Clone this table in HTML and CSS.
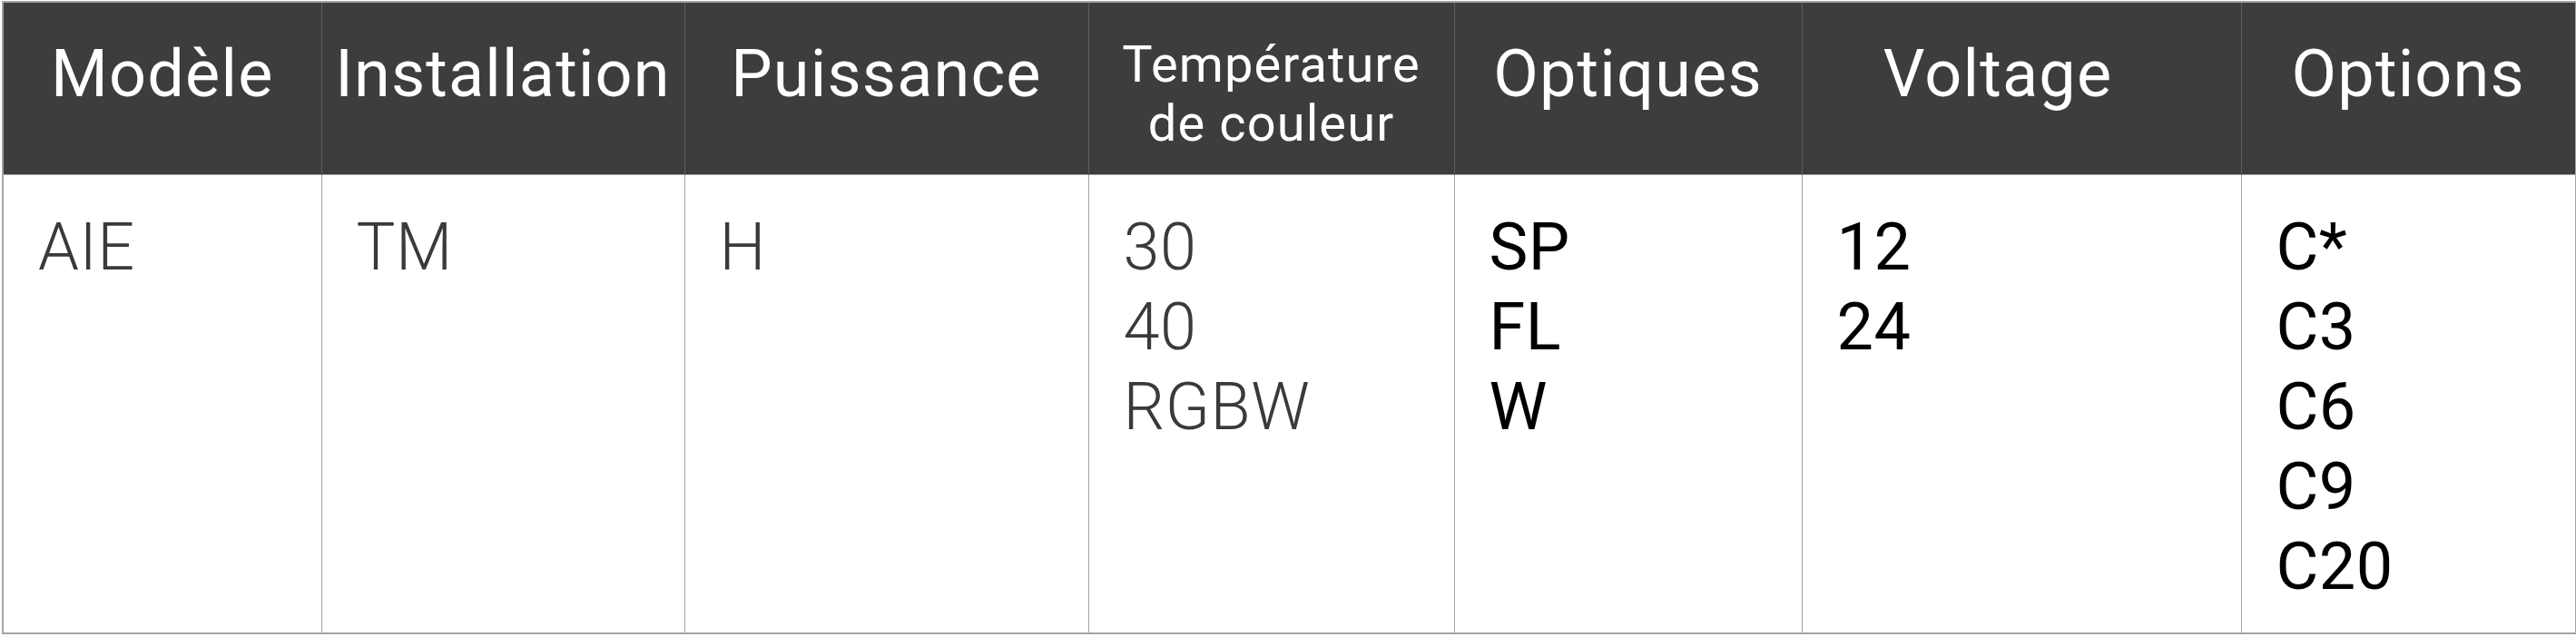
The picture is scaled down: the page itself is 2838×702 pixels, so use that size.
FILE: index.html
```html
<!DOCTYPE html>
<html lang="fr">
<head>
<meta charset="utf-8">
<title>Tableau</title>
<link rel="stylesheet" href="styles.css">
</head>
<body>
<table class="spec">
  <colgroup>
    <col class="c1"><col class="c2"><col class="c3"><col class="c4"><col class="c5"><col class="c6"><col class="c7">
  </colgroup>
  <thead>
    <tr>
      <th>Modèle</th>
      <th>Installation</th>
      <th>Puissance</th>
      <th class="small">Température<br>de couleur</th>
      <th>Optiques</th>
      <th class="shift">Voltage</th>
      <th>Options</th>
    </tr>
  </thead>
  <tbody>
    <tr>
      <td class="light">AIE</td>
      <td class="light">TM</td>
      <td class="light">H</td>
      <td class="light">30<br>40<br>RGBW</td>
      <td>SP<br>FL<br>W</td>
      <td>12<br>24</td>
      <td>C*<br>C3<br>C6<br>C9<br>C20</td>
    </tr>
  </tbody>
</table>
</body>
</html>
```

FILE: styles.css
```css
html, body {
  margin: 0;
  padding: 0;
  background: #ffffff;
}
body {
  padding: 1px 0 0 2px;
  font-family: Roboto, "Liberation Sans", sans-serif;
}
.spec {
  border-collapse: collapse;
  table-layout: fixed;
  width: 2835px;
  border: 2px solid #a4a4a4;
}
.c1 { width: 351px; }
.c2 { width: 400px; }
.c3 { width: 445px; }
.c4 { width: 403px; }
.c5 { width: 383px; }
.c6 { width: 484px; }
.c7 { width: 369px; }

.spec th {
  background: #3c3d3c;
  color: #ffffff;
  font-weight: 400;
  font-size: 72px;
  line-height: 86px;
  text-align: center;
  vertical-align: top;
  padding: 36px 0 0 0;
  height: 153px;
  border-left: 1px solid #5e5f5e;
  border-right: 1px solid #5e5f5e;
  border-top: 2px solid #a4a4a4;
  white-space: nowrap;
  letter-spacing: 1.2px;
}
.spec th.small {
  font-size: 56px;
  line-height: 65px;
  letter-spacing: 1.1px;
}
.spec th.shift {
  padding-right: 52px;
}
.spec td {
  font-size: 72px;
  line-height: 88px;
  font-weight: 400;
  color: #000000;
  vertical-align: top;
  text-align: left;
  padding: 36px 38px 28px 38px;
  height: 440px;
  border: 1px solid #a4a4a4;
  letter-spacing: 0.5px;
}
.spec td.light {
  font-weight: 300;
  color: #3a3a3a;
}
```
